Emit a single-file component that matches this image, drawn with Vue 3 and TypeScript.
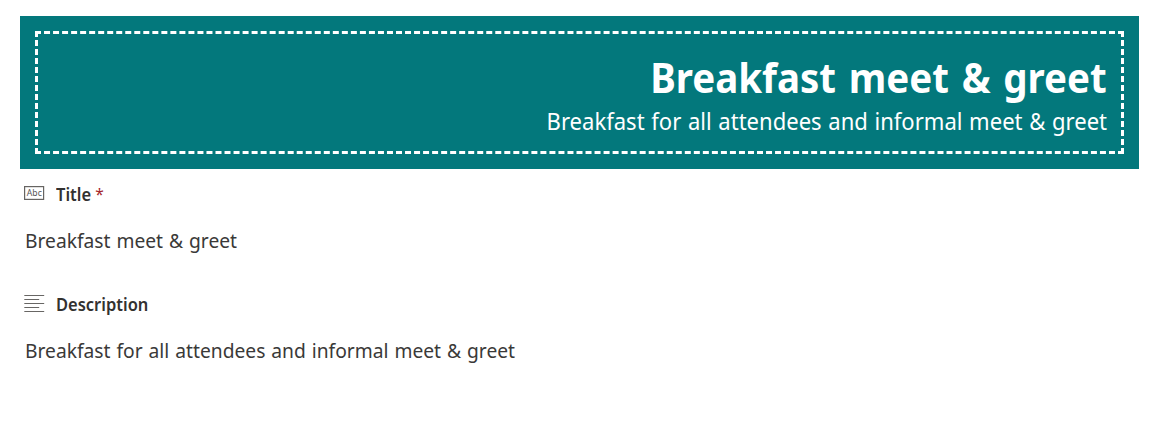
<script setup lang="ts">
interface Item {
  title: string
  description: string
}

const item: Item = {
  title: 'Breakfast meet & greet',
  description: 'Breakfast for all attendees and informal meet & greet',
}
</script>

<template>
  <main class="page">
    <header class="banner">
      <div class="frame">
        <h1 class="heading"><span>{{ item.title }}</span></h1>
        <p class="subheading"><span>{{ item.description }}</span></p>
      </div>
    </header>

    <section class="field">
      <div class="label">
        <svg class="icon" width="21" height="20" viewBox="0 0 21 20" aria-hidden="true">
          <rect x="0.6" y="2.6" width="19" height="12.8" fill="none" stroke="#666462" stroke-width="1.2" />
          <text x="2.8" y="12" class="abc" textLength="15" lengthAdjust="spacingAndGlyphs">Abc</text>
        </svg>
        <span class="name">Title</span><span class="required">*</span>
      </div>
      <div class="value"><span>{{ item.title }}</span></div>
    </section>

    <section class="field">
      <div class="label">
        <svg class="icon" width="21" height="20" viewBox="0 0 21 20" aria-hidden="true">
          <path d="M0.3 1.5H20.2M0.3 5.5H15.2M0.3 9.5H20.2M0.3 13.5H15.2M0.3 17.5H20.2" fill="none" stroke="#686664" stroke-width="1" />
        </svg>
        <span class="name">Description</span>
      </div>
      <div class="value"><span>{{ item.description }}</span></div>
    </section>
  </main>
</template>

<style>
body {
  margin: 0;
  background: #fff;
}
</style>

<style scoped>
.page {
  box-sizing: border-box;
  height: 431px;
  padding: 16px 35px 0 20px;
  overflow: hidden;
  font-family: 'Noto Sans', 'Open Sans', sans-serif;
  color: #3a3938;
  white-space: nowrap;
}
.banner {
  box-sizing: border-box;
  height: 153px;
  padding: 15px;
  background: #03787c;
}
.frame {
  box-sizing: border-box;
  height: 123px;
  padding: 17px 14px 0 0;
  border: 3px dashed #fff;
  color: #fff;
  text-align: right;
}
.heading {
  margin: 0;
  font-size: 41px;
  line-height: 52px;
  font-weight: 700;
  word-spacing: 3px;
}
.subheading {
  margin: 0;
  font-size: 23.6px;
  line-height: 36px;
  word-spacing: 1px;
}
.heading span,
.subheading span {
  display: inline-block;
  transform: scaleX(0.938);
  transform-origin: right center;
}
.subheading span {
  transform: scaleX(0.934);
}
.field {
  height: 110px;
  padding-left: 4px;
}
.label {
  display: flex;
  align-items: center;
  height: 50px;
  font-size: 17px;
  font-weight: 600;
  color: #323130;
}
.name {
  transform: scaleX(0.97);
  transform-origin: left center;
}
.icon {
  flex: none;
  margin-right: 11px;
}
.abc {
  font-size: 8.5px;
  font-weight: 400;
  fill: #555;
}
.required {
  margin-left: 3px;
  font-size: 15.5px;
  color: #a4262c;
  font-weight: 400;
}
.value {
  height: 42px;
  padding-left: 0.5px;
  font-size: 20.4px;
  line-height: 42px;
  word-spacing: 1px;
}
.value span {
  display: inline-block;
  transform: scaleX(0.943);
  transform-origin: left center;
}
</style>
